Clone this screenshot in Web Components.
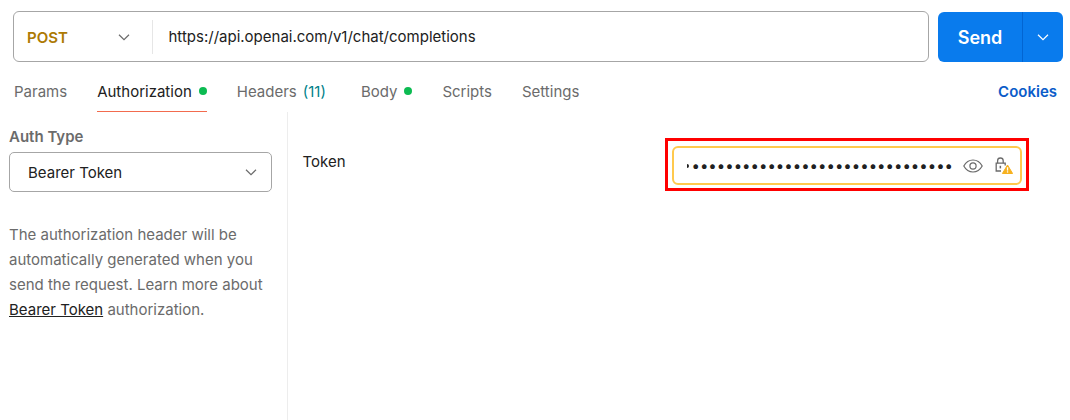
<!DOCTYPE html>
<html>
<head>
<meta charset="utf-8">
<title>Authorization</title>
<style>
  html, body { margin: 0; background: #fff; }
  body { width: 1070px; height: 420px; overflow: hidden; font-family: Inter, "Liberation Sans", sans-serif; font-size: 15px; color: #212121; }
</style>
</head>
<body>
<request-page></request-page>

<script>
const chevron = (size, color) => `
  <svg width="${size}" height="${size}" viewBox="0 0 16 16" fill="none" stroke="${color}" stroke-width="1.2">
    <path d="M3 5.8 8 10.6 13 5.8"/>
  </svg>`;

// barra de la url con el boton de enviar
class UrlBar extends HTMLElement {
  constructor() {
    super();
    this.attachShadow({ mode: "open" });
  }

  connectedCallback() {
    this.shadowRoot.innerHTML = `
      <style>
        :host { display: flex; gap: 9px; padding: 11px 7px 0 13px; }
        .box {
          flex: 1;
          height: 51px;
          box-sizing: border-box;
          border: 1px solid #a6a6a6;
          border-radius: 6px;
          display: flex;
          align-items: center;
        }
        .method {
          width: 139px;
          height: 34px;
          box-sizing: border-box;
          padding: 1px 20px 0 13px;
          display: flex;
          align-items: center;
          justify-content: space-between;
          border-right: 1px solid #e6e6e6;
          font-weight: 600;
          color: #ad7a03;
        }
        .method svg { display: block; margin-top: -1px; }
        .url { padding-left: 15.5px; color: #212121; }
        .send {
          width: 125px;
          height: 50px;
          margin-top: 1px;
          display: flex;
          background: #097bed;
          border-radius: 6px;
          color: #fff;
          font-size: 18px;
          font-weight: 600;
        }
        .label { flex: 1; display: flex; align-items: center; justify-content: center; }
        .more {
          width: 40px;
          display: flex;
          align-items: center;
          justify-content: center;
          border-left: 1px solid #0265d2;
        }
      </style>
      <div class="box">
        <div class="method"><span>POST</span>${chevron(16, "#6b6b6b")}</div>
        <div class="url">https://api.openai.com/v1/chat/completions</div>
      </div>
      <div class="send">
        <div class="label">Send</div>
        <div class="more">${chevron(16, "#fff")}</div>
      </div>`;
  }
}

// pestañas de la peticion
class RequestTabs extends HTMLElement {
  constructor() {
    super();
    this.attachShadow({ mode: "open" });
    this._tabs = [
      { name: "Params" },
      { name: "Authorization", dot: true, active: true },
      { name: "Headers", count: "(11)" },
      { name: "Body", dot: true },
      { name: "Scripts" },
      { name: "Settings" },
    ];
  }

  connectedCallback() {
    this.shadowRoot.innerHTML = `
      <style>
        :host {
          display: flex;
          height: 50px;
          box-sizing: border-box;
          padding: 0 13px 0 14px;
          align-items: stretch;
          gap: 30px;
        }
        .tab {
          display: flex;
          align-items: center;
          gap: 6px;
          height: 50px;
          box-sizing: border-box;
          padding-top: 9px;
          color: #6b6b6b;
          border-bottom: 1px solid transparent;
        }
        .tab.active { color: #212121; border-bottom-color: #f26b4e; }
        .tab.counted { margin-right: 5px; }
        .dot { width: 8px; height: 8px; border-radius: 50%; background: #0cbb52; margin-left: 1px; }
        .count { color: #007f8a; }
        .cookies { margin-left: auto; display: flex; align-items: center; padding-top: 9px; color: #0b5cc9; font-weight: 600; }
      </style>
      ${this._tabs
        .map(
          (t) => `
        <div class="tab ${t.active ? "active" : ""} ${t.count ? "counted" : ""}">
          <span>${t.name}</span>
          ${t.count ? `<span class="count">${t.count}</span>` : ""}
          ${t.dot ? `<span class="dot"></span>` : ""}
        </div>`
        )
        .join("")}
      <div class="cookies">Cookies</div>`;
  }
}

// columna izquierda con el tipo de autorizacion
class AuthSidebar extends HTMLElement {
  constructor() {
    super();
    this.attachShadow({ mode: "open" });
  }

  connectedCallback() {
    this.shadowRoot.innerHTML = `
      <style>
        :host {
          display: block;
          width: 288px;
          box-sizing: border-box;
          padding: 16px 15px 0 9px;
          border-right: 1px solid #ededed;
        }
        .title { font-weight: 600; color: #6b6b6b; line-height: 18px; }
        .select {
          margin-top: 6px;
          height: 40px;
          box-sizing: border-box;
          border: 1px solid #a6a6a6;
          border-radius: 5px;
          display: flex;
          align-items: center;
          justify-content: space-between;
          padding: 0 12px 0 18px;
          color: #212121;
        }
        p { margin: 30px 0 0; line-height: 25px; color: #6b6b6b; }
        a { color: #212121; text-decoration: underline; }
      </style>
      <div class="title">Auth Type</div>
      <div class="select"><span>Bearer Token</span>${chevron(16, "#6b6b6b")}</div>
      <p>The authorization header will be automatically generated when you send the request. Learn more about <a>Bearer Token</a> authorization.</p>`;
  }
}

// campo del token, marcado con el recuadro rojo
class TokenField extends HTMLElement {
  constructor() {
    super();
    this.attachShadow({ mode: "open" });
  }

  connectedCallback() {
    this.shadowRoot.innerHTML = `
      <style>
        :host {
          display: flex;
          flex: 1;
          align-items: flex-start;
          justify-content: space-between;
          padding: 26px 41px 0 14.5px;
        }
        .label { padding-top: 15px; line-height: 17px; color: #212121; }
        .mark { border: 3px solid #f00; padding: 5px 4px 3px; }
        .input {
          width: 350px;
          height: 39px;
          box-sizing: border-box;
          border: 2px solid #ffc94d;
          border-radius: 6px;
          display: flex;
          align-items: center;
          padding: 0 7px 0 13px;
        }
        .dots {
          flex: 1;
          min-width: 0;
          display: flex;
          align-items: center;
          justify-content: flex-end;
          white-space: nowrap;
          line-height: 18px;
          color: #212121;
          margin-right: 10px;
        }
        .cut { width: 2px; height: 4px; border-radius: 0 2px 2px 0; background: #212121; margin: 1px 2px 0 0; }
        .eye { display: block; margin-right: 10px; }
        .lock { display: block; }
      </style>
      <div class="label">Token</div>
      <div class="mark">
        <div class="input">
          <div class="dots"><i class="cut"></i><span>${"•".repeat(31)}</span></div>
          <svg class="eye" width="20" height="14" viewBox="0 0 20 14" fill="none" stroke="#6b6b6b" stroke-width="1.2">
            <path d="M.8 7C3 3 6.2 1 10 1s7 2 9.2 6c-2.2 4-5.4 6-9.2 6S3 11 .8 7Z"/>
            <circle cx="10" cy="7" r="3.1"/>
          </svg>
          <svg class="lock" width="20" height="20" viewBox="0 0 20 20" fill="none">
            <path d="M4.6 7.2V4.8a2.8 2.8 0 0 1 5.6 0v2.4" stroke="#6b6b6b" stroke-width="1.3"/>
            <path d="M8 15H3.2V7.2h9v2.2" stroke="#6b6b6b" stroke-width="1.3"/>
            <rect x="6.6" y="9.8" width="1.5" height="2.6" fill="#6b6b6b"/>
            <path d="M14.5 9 19.6 17.5H9.4Z" fill="#f7b11e" stroke="#f7b11e" stroke-linejoin="round"/>
            <rect x="13.9" y="11.2" width="1.3" height="3.4" fill="#fff"/>
            <rect x="13.9" y="15.3" width="1.3" height="1.3" fill="#fff"/>
          </svg>
        </div>
      </div>`;
  }
}

// pagina completa
class RequestPage extends HTMLElement {
  constructor() {
    super();
    this.attachShadow({ mode: "open" });
  }

  connectedCallback() {
    this.shadowRoot.innerHTML = `
      <style>
        :host { display: flex; flex-direction: column; height: 420px; }
        .content { flex: 1; display: flex; }
      </style>
      <url-bar></url-bar>
      <request-tabs></request-tabs>
      <div class="content">
        <auth-sidebar></auth-sidebar>
        <token-field></token-field>
      </div>`;
  }
}

customElements.define("url-bar", UrlBar);
customElements.define("request-tabs", RequestTabs);
customElements.define("auth-sidebar", AuthSidebar);
customElements.define("token-field", TokenField);
customElements.define("request-page", RequestPage);
</script>
</body>
</html>
